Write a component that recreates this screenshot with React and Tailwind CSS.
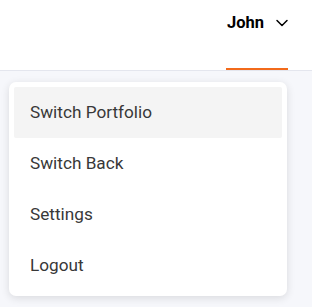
import { ChevronDown } from 'lucide-react';
import React from 'react'

const menuItems = ["Switch Portfolio", "Switch Back", "Settings", "Logout"];

const App = () => {
  return (
    <div className="w-[312px] h-[307px] bg-[#f6f7fb] overflow-hidden" style={{ fontFamily: 'Roboto, "Liberation Sans", sans-serif' }}>
      <div className="h-[71px] bg-white border-b border-[#e4e6ee] flex justify-end pr-[24px]">
        <div className="relative w-[62px] pt-[11px]">
          <button className="flex items-center gap-[8px] text-[16.5px] font-bold text-black whitespace-nowrap pl-[1px]">
            John
            <ChevronDown className="size-[20px]" strokeWidth={1.8} />
          </button>
          <div className="absolute left-0 right-0 bottom-0 h-[2px] bg-[#f26a1b]"></div>
        </div>
      </div>

      <div className="ml-[9px] mt-[11px] w-[278px] bg-white rounded-[7px] shadow-[0_2px_8px_rgba(0,0,0,0.12)] p-[5px]">
        {menuItems.map((item, index) => (
          <div key={index} className={`h-[51px] flex items-center pt-[1px] px-[16px] rounded-[2px] text-[17.2px] text-[#383838] ${index === 0 ? "bg-[#f4f4f4]" : ""}`}>
            {item}
          </div>
        ))}
      </div>
    </div>
  )
}

export default App
